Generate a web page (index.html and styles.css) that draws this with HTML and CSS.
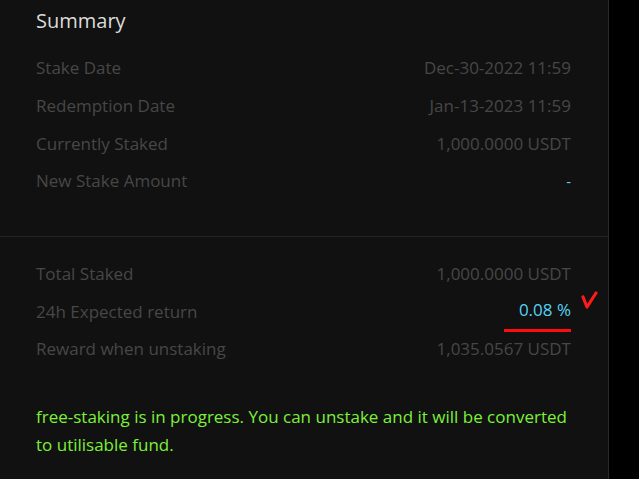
FILE: index.html
```html
<!DOCTYPE html>
<html lang="en">
<head>
    <meta charset="UTF-8">
    <meta name="viewport" content="width=device-width, initial-scale=1.0">
    <title>Summary</title>
    <link rel="stylesheet" href="styles.css">
</head>
<body>
    <div class="summary-panel">
        <div class="summary-top">
            <h2>Summary</h2>
            <div class="row"><span class="label">Stake Date</span><span class="value">Dec-30-2022 11:59</span></div>
            <div class="row"><span class="label">Redemption Date</span><span class="value">Jan-13-2023 11:59</span></div>
            <div class="row"><span class="label">Currently Staked</span><span class="value">1,000.0000 USDT</span></div>
            <div class="row"><span class="label">New Stake Amount</span><span class="value dash">-</span></div>
        </div>

        <div class="summary-bottom">
            <div class="row"><span class="label">Total Staked</span><span class="value">1,000.0000 USDT</span></div>
            <div class="row">
                <span class="label">24h Expected return</span>
                <span class="value rate">0.08 %
                    <!-- hand drawn check mark -->
                    <svg class="tick" width="18" height="22" viewBox="0 0 18 22">
                        <path d="M2 7 L6 17 L15 3" fill="none" stroke="#ff1a1a" stroke-width="3.2" stroke-linecap="round" stroke-linejoin="round"/>
                    </svg>
                </span>
            </div>
            <div class="row"><span class="label">Reward when unstaking</span><span class="value">1,035.0567 USDT</span></div>

            <p class="notice">free-staking is in progress. You can unstake and it will be converted to utilisable fund.</p>
        </div>
    </div>
</body>
</html>
```

FILE: styles.css
```css
body {
    margin: 0;
    background: #000;
    font-family: 'Open Sans', 'Noto Sans', sans-serif;
}
.summary-panel {
    width: 608px;
    height: 479px;
    background: #111111;
    border-right: 1px solid #2a2a2a;
}
.summary-top {
    padding: 7px 37px 36px 36px;
}
h2 {
    margin: 0 0 14px;
    font-size: 20px;
    font-weight: 400;
    line-height: 28px;
    color: #dcdcdc;
}
.row {
    display: flex;
    justify-content: space-between;
    align-items: center;
    height: 37.7px;
    font-size: 17px;
}
.label {
    color: #474747;
}
.value {
    color: #474747;
}
.value.dash {
    color: #5fd4f0;
    font-size: 15px;
}
.summary-bottom {
    border-top: 1px solid #242424;
    padding: 18px 37px 0 36px;
}
.rate {
    position: relative;
    color: #55d3f5;
    border-bottom: 3px solid #ff0d0d;
    padding: 8px 0 8px 15px;
}
.tick {
    position: absolute;
    left: 100%;
    top: 0;
    margin-left: 10px;
}
.notice {
    margin: 35px 0 0;
    font-size: 17px;
    line-height: 28px;
    color: #7cf03a;
}
```
